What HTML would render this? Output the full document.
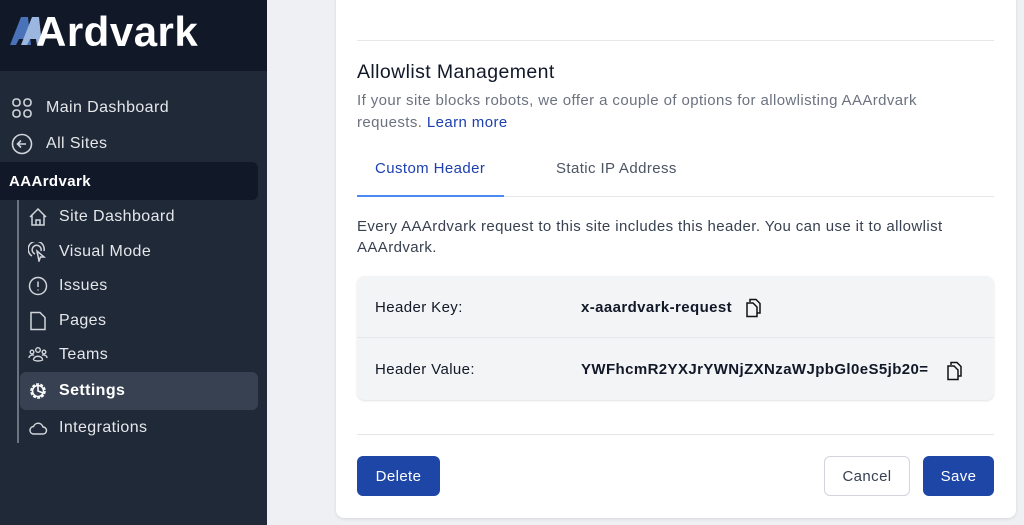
<!DOCTYPE html>
<html><head><style>
*{box-sizing:border-box;margin:0;padding:0}
body{width:1024px;height:525px;overflow:hidden;font-family:"Liberation Sans",Arial,sans-serif;background:#eef0f3;position:relative;letter-spacing:0.4px}
.sb{position:absolute;left:0;top:0;width:267px;height:525px;background:#1f2937}
.logo{position:absolute;left:0;top:0;width:267px;height:71px;background:#111827}
.logo span{position:absolute;left:36px;top:8px;font-size:42px;font-weight:bold;color:#fff;letter-spacing:0.5px}
.it{position:absolute;color:#e5e7eb;font-size:16px;display:flex;align-items:center}
.it svg{position:absolute;left:0;top:50%;transform:translateY(-50%)}
.main{position:absolute;left:336px;top:-20px;width:680px;height:538px;background:#fff;border-radius:8px;box-shadow:0 1px 3px rgba(0,0,0,.1)}
.t{position:absolute}
.btn{position:absolute;height:40px;border-radius:6px;font-size:15px;display:flex;align-items:center;justify-content:center}
</style></head><body>
<div class="sb">
 <div class="logo">
  <svg style="position:absolute;left:10px;top:16px" width="34" height="30" viewBox="0 0 34 30"><path d="M0 29 L11 1 H18 L21 29 H16 L15 23 H9 L6 29Z" fill="#4a72b8"/><path d="M11 29 L22 1 H29 L32 29 H27 L26 23 H20 L17 29Z" fill="#9bb7e0"/></svg>
  <span>Ardvark</span>
 </div>
 <div class="it" style="left:12px;top:98px;height:20px;padding-left:34px"><svg width="20" height="20" viewBox="0 0 20 20" fill="none" stroke="#d1d5db" stroke-width="1.6"><rect x="1" y="1" width="7" height="7" rx="3"/><rect x="12" y="1" width="7" height="7" rx="3"/><rect x="1" y="12" width="7" height="7" rx="3"/><rect x="12" y="12" width="7" height="7" rx="3"/></svg>Main Dashboard</div>
 <div class="it" style="left:11px;top:134px;height:20px;padding-left:35px"><svg width="22" height="22" viewBox="0 0 22 22" fill="none" stroke="#d1d5db" stroke-width="1.6"><circle cx="11" cy="11" r="9.5"/><path d="M15 11H7M10 7.5L6.5 11L10 14.5"/></svg>All Sites</div>
 <div style="position:absolute;left:0;top:162px;width:258px;height:38px;background:#111827;border-radius:0 6px 6px 0;color:#fff;font-weight:bold;font-size:15px;padding:11px 9px">AAArdvark</div>
 <div style="position:absolute;left:17px;top:200px;width:2px;height:243px;background:#6b7280"></div>
 <div style="position:absolute;left:20px;top:372px;width:238px;height:38px;background:#374151;border-radius:6px"></div>
 <div class="it" style="left:28px;top:207px;height:20px;padding-left:31px"><svg width="20" height="20" viewBox="0 0 20 20" fill="none" stroke="#d1d5db" stroke-width="1.5"><path d="M2 10L10 2L18 10M4 8V18H16V8M8 18V13H12V18"/></svg>Site Dashboard</div>
 <div class="it" style="left:28px;top:242px;height:20px;padding-left:31px"><svg width="20" height="20" viewBox="0 0 20 20" fill="none" stroke="#d1d5db" stroke-width="1.5"><path d="M4 14A8 8 0 1 1 16 9M7 12A4.5 4.5 0 1 1 13 9"/><path d="M9 9L11 19L12.5 15L16 15Z"/></svg>Visual Mode</div>
 <div class="it" style="left:28px;top:276px;height:20px;padding-left:31px"><svg width="20" height="20" viewBox="0 0 20 20" fill="none" stroke="#d1d5db" stroke-width="1.5"><circle cx="10" cy="10" r="8.5"/><path d="M10 5.5V11M10 13.5V14.5"/></svg>Issues</div>
 <div class="it" style="left:28px;top:311px;height:20px;padding-left:31px"><svg width="20" height="20" viewBox="0 0 20 20" fill="none" stroke="#d1d5db" stroke-width="1.5"><path d="M3 1.5H12L17 6.5V18.5H3Z"/></svg>Pages</div>
 <div class="it" style="left:28px;top:345px;height:20px;padding-left:31px"><svg width="20" height="20" viewBox="0 0 20 20" fill="none" stroke="#d1d5db" stroke-width="1.4"><circle cx="10" cy="5" r="2.3"/><circle cx="4" cy="7" r="1.8"/><circle cx="16" cy="7" r="1.8"/><path d="M5.5 15C5.5 10 14.5 10 14.5 15Q10 17 5.5 15M1 13C1 10 5 9.5 6 10.5M19 13C19 10 15 9.5 14 10.5"/></svg>Teams</div>
 <div class="it" style="left:28px;top:381px;height:20px;padding-left:31px;font-weight:bold;color:#fff"><svg width="20" height="20" viewBox="0 0 20 20" fill="none" stroke="#fff" stroke-width="1.6"><circle cx="10" cy="10" r="7" stroke-dasharray="3 1.4"/><circle cx="10" cy="10" r="5.5"/><path d="M10 4.5V10L15 12"/></svg>Settings</div>
 <div class="it" style="left:28px;top:418px;height:20px;padding-left:31px"><svg width="20" height="20" viewBox="0 0 20 20" fill="none" stroke="#d1d5db" stroke-width="1.5"><path d="M5 16H15A3.5 3.5 0 0 0 15 9A5 5 0 0 0 5.5 8.5A3.8 3.8 0 0 0 5 16Z"/></svg>Integrations</div>
</div>
<div class="main"></div>
<div class="t" style="left:357px;top:40px;width:637px;height:1px;background:#e5e7eb"></div>
<div class="t" style="left:357px;top:61px;font-size:19.5px;color:#111827">Allowlist Management</div>
<div class="t" style="left:357px;top:90px;width:590px;font-size:15px;line-height:22px;color:#6b7280">If your site blocks robots, we offer a couple of options for allowlisting AAArdvark requests. <span style="color:#1e40af">Learn more</span></div>
<div class="t" style="left:375px;top:160px;font-size:15px;color:#1e40af">Custom Header</div>
<div class="t" style="left:556px;top:160px;font-size:15px;color:#4b5563">Static IP Address</div>
<div class="t" style="left:357px;top:196px;width:637px;height:1px;background:#e5e7eb"></div>
<div class="t" style="left:357px;top:195px;width:147px;height:2px;background:#4b8af0"></div>
<div class="t" style="left:357px;top:216px;width:620px;font-size:15px;line-height:21px;color:#374151">Every AAArdvark request to this site includes this header. You can use it to allowlist AAArdvark.</div>
<div class="t" style="left:357px;top:276px;width:637px;height:124px;background:#f3f4f6;border-radius:8px;box-shadow:0 1px 2px rgba(0,0,0,.12)"></div>
<div class="t" style="left:357px;top:337px;width:637px;height:1px;background:#e5e7eb"></div>
<div class="t" style="left:375px;top:299px;font-size:15px;color:#111827">Header Key:</div>
<div class="t" style="left:581px;top:299px;font-size:15px;font-weight:bold;color:#111827">x-aaardvark-request</div>
<div class="t" style="left:375px;top:361px;font-size:15px;color:#111827">Header Value:</div>
<div class="t" style="left:581px;top:361px;font-size:15px;font-weight:bold;color:#111827">YWFhcmR2YXJrYWNjZXNzaWJpbGl0eS5jb20=</div>
<svg class="t" style="left:745px;top:298px" width="18" height="20" viewBox="0 0 18 20" fill="none" stroke="#111" stroke-width="1.5"><path d="M5 4V1.5H11L15 5.5V15H12"/><path d="M2 5H8L12 9V18.5H2Z"/></svg>
<svg class="t" style="left:946px;top:361px" width="18" height="20" viewBox="0 0 18 20" fill="none" stroke="#111" stroke-width="1.5"><path d="M5 4V1.5H11L15 5.5V15H12"/><path d="M2 5H8L12 9V18.5H2Z"/></svg>
<div class="t" style="left:357px;top:434px;width:637px;height:1px;background:#e5e7eb"></div>
<div class="btn" style="left:357px;top:456px;width:83px;background:#1e46a6;color:#fff">Delete</div>
<div class="btn" style="left:824px;top:456px;width:86px;background:#fff;border:1px solid #d1d5db;color:#374151">Cancel</div>
<div class="btn" style="left:923px;top:456px;width:71px;background:#1e46a6;color:#fff">Save</div>
</body></html>
